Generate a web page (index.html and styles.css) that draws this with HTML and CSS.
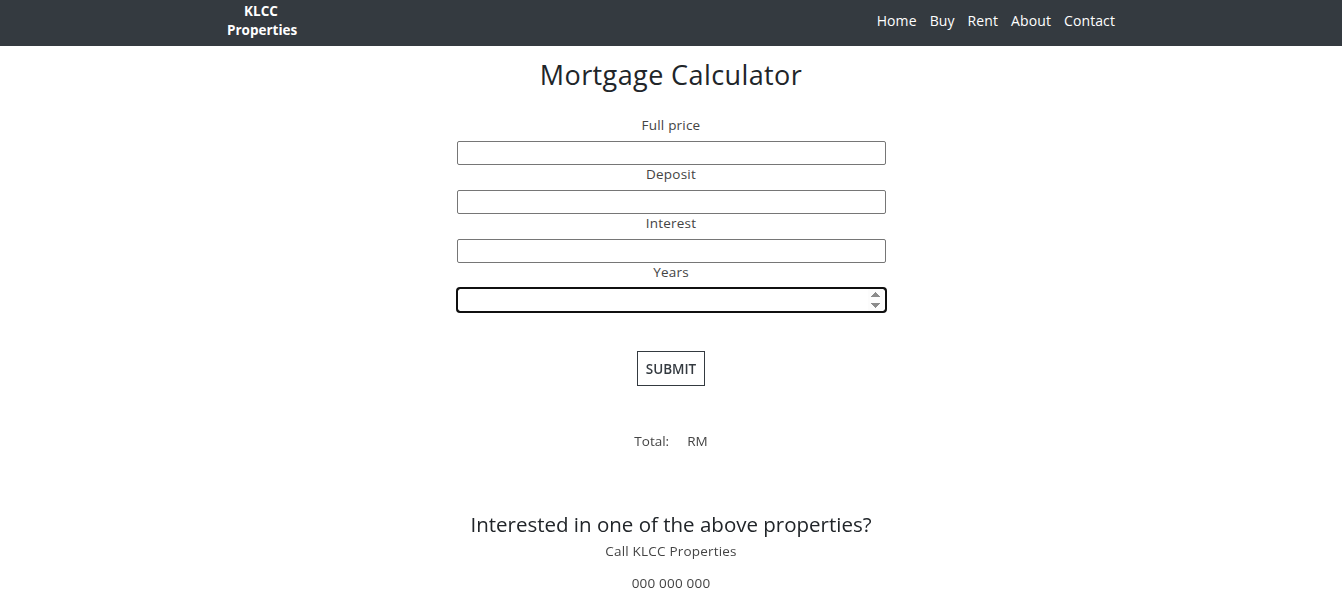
FILE: index.html
```html
<!DOCTYPE html>
<html lang="en">
<head>
<meta charset="utf-8">
<title>Mortgage Calculator</title>
<link rel="stylesheet" href="styles.css">
</head>
<body>
<header class="navbar">
  <div class="nav-inner">
    <a class="brand" href="#">KLCC<br>Properties</a>
    <nav class="nav-links">
      <a href="#">Home</a>
      <a href="#">Buy</a>
      <a href="#">Rent</a>
      <a href="#">About</a>
      <a href="#">Contact</a>
    </nav>
  </div>
</header>
<main class="main">
  <h1 class="title">Mortgage Calculator</h1>
  <form class="calc">
    <label class="field-label" for="price">Full price</label>
    <input class="field" id="price" type="text">
    <label class="field-label" for="deposit">Deposit</label>
    <input class="field" id="deposit" type="text">
    <label class="field-label" for="interest">Interest</label>
    <input class="field" id="interest" type="text">
    <label class="field-label" for="years">Years</label>
    <input class="field field-focus" id="years" type="number" autofocus>
    <button class="submit" type="button">SUBMIT</button>
  </form>
  <p class="total"><span>Total:</span><span>RM</span></p>
  <section class="contact">
    <h2 class="contact-title">Interested in one of the above properties?</h2>
    <p class="contact-text">Call KLCC Properties</p>
    <p class="contact-text">000 000 000</p>
  </section>
</main>
</body>
</html>
```
FILE: styles.css
```css
* { box-sizing: border-box; }
body {
  margin: 0;
  font-family: "Open Sans", "Noto Sans", sans-serif;
  color: #212529;
  background: #fff;
}
.navbar {
  background: #343a40;
  height: 46px;
}
.nav-inner {
  width: 888px;
  height: 100%;
  margin: 0 auto;
  padding-bottom: 5px;
  display: flex;
  align-items: center;
  justify-content: space-between;
}
.brand {
  color: #fff;
  font-weight: 700;
  font-size: 13.5px;
  line-height: 19px;
  text-align: center;
  text-decoration: none;
  width: 68px;
}
.nav-links {
  display: flex;
  gap: 13px;
}
.nav-links a {
  color: #fff;
  font-size: 14px;
  letter-spacing: 0.1px;
  text-decoration: none;
}
.main {
  display: flex;
  flex-direction: column;
  align-items: center;
}
.title {
  margin: 12px 0 0;
  font-size: 27px;
  font-weight: 400;
  line-height: 34px;
  letter-spacing: 0.4px;
}
.calc {
  margin-top: 24px;
  width: 429px;
  display: flex;
  flex-direction: column;
  align-items: center;
}
.field-label {
  font-size: 13.5px;
  letter-spacing: 0.2px;
  line-height: 18px;
  color: #444;
  margin-bottom: 7px;
}
.field {
  width: 100%;
  height: 24px;
  border: 1px solid #767676;
  border-radius: 2px;
  padding: 1px 2px;
  font: inherit;
}
.field-focus {
  outline: 2px solid #101010;
  outline-offset: -1px;
  border-color: #101010;
  border-radius: 3px;
}
.submit {
  margin-top: 39px;
  height: 35px;
  padding: 0 8px;
  background: #fff;
  border: 1px solid #343a40;
  border-radius: 0;
  font-family: inherit;
  font-size: 13.5px;
  font-weight: 600;
  color: #343a40;
}
.total {
  margin: 46px 0 0;
  display: flex;
  gap: 18px;
  font-size: 13.5px;
  color: #444;
}
.contact {
  margin-top: 62px;
  display: flex;
  flex-direction: column;
  align-items: center;
}
.contact-title {
  margin: 0;
  font-size: 20.5px;
  font-weight: 400;
  line-height: 24px;
}
.contact-text {
  margin: 6px 0 0;
  font-size: 13.5px;
  letter-spacing: 0.2px;
  line-height: 18px;
  color: #444;
}
.contact-text + .contact-text {
  margin-top: 14px;
}
```
